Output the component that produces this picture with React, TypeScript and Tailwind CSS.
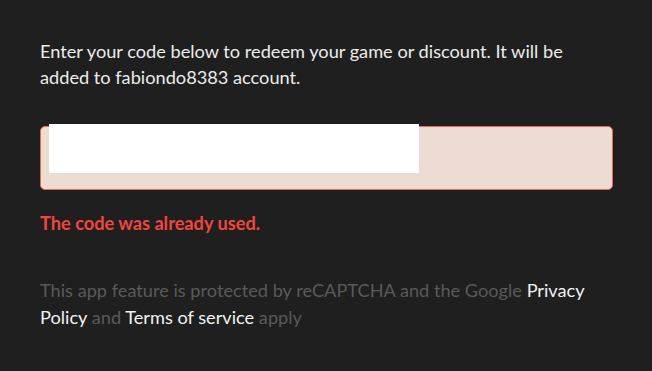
const App = () => {
  return (
    <div className="min-h-[371px] w-full bg-[#1f1f1f] pl-10 pr-[39px] pt-[38px] font-['Lato',sans-serif] text-[18.2px]">
      <p className="leading-[26px] text-[#ececec]">
        Enter your code below to redeem your game or discount. It will be added to fabiondo8383 account.
      </p>

      <div className="relative mt-[36px]">
        <div className="h-[64px] w-full rounded-[5px] border border-[#f0655b] bg-[#ecdcd4]" />
        {/* redacted code */}
        <div className="absolute left-[9px] top-[-2px] h-[49px] w-[370px] bg-white" />
      </div>

      <p className="mt-[20px] font-bold leading-[26px] text-[#f2453d]">The code was already used.</p>

      <p className="mt-[41px] leading-[27px] text-[#5a5a5a]">
        This app feature is protected by reCAPTCHA and the Google{" "}
        <a className="text-[#f2f2f2]">Privacy</a> <a className="text-[#f2f2f2]">Policy</a> and{" "}
        <a className="text-[#f2f2f2]">Terms of service</a> apply
      </p>
    </div>
  );
};

export default App;
